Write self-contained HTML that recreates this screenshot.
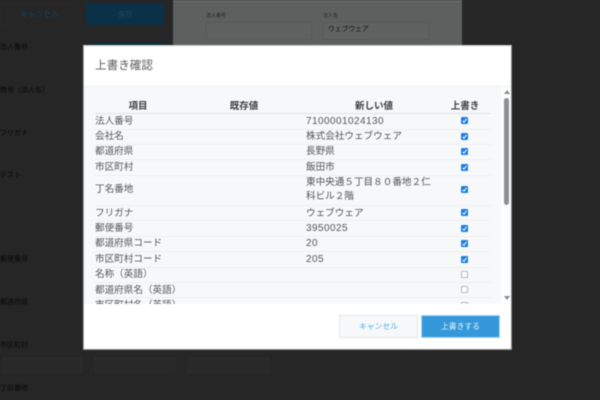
<!DOCTYPE html>
<html lang="ja">
<head>
<meta charset="utf-8">
<style>
html,body{margin:0;padding:0;width:600px;height:400px;overflow:hidden;background:#262626;font-family:"Liberation Sans","Noto Sans CJK JP",sans-serif;}
*{box-sizing:border-box;}
.a{position:absolute;white-space:nowrap;}
#wrap{position:absolute;left:0;top:0;width:600px;height:400px;overflow:hidden;filter:blur(0.4px);}
.lbl{font-size:7px;color:#080808;line-height:10px;left:0;}
.inp{background:#292929;border:1px solid #2b2b2b;}
#modal{left:83px;top:45px;width:429px;height:305px;background:#fff;border:1px solid #8c8c8c;border-top-color:#ccc;border-left-color:#aaa;}
#body{position:absolute;left:0;top:40px;width:427px;height:218px;background:#f7f8fa;border-top:1px solid #f0f1f3;overflow:hidden;}
.hd{position:absolute;top:13px;font-size:9.5px;font-weight:bold;color:#3d3d3d;line-height:14px;text-align:center;white-space:nowrap;}
.line{position:absolute;left:11px;width:396px;height:1px;background:#eceef0;}
.t{position:absolute;font-size:9.6px;color:#555;line-height:14px;white-space:nowrap;}
.n{font-size:10px;letter-spacing:.44px;}
.cb{position:absolute;left:377px;width:7px;height:7px;border-radius:1px;background:#1a7fdc;}
.cb svg{position:absolute;left:0;top:0;}
.un{background:#fff;border:1px solid #b5b5b5;}
</style>
</head>
<body>
<div id="wrap">
  <div class="a" style="left:173px;top:0;width:289px;height:45px;background:#5e6060;"></div>
  <div class="a" style="left:173px;top:0;width:289px;height:4px;background:#646665;border-bottom:1px solid #585a5a;"></div>
  <div class="a" style="left:0;top:3px;width:78px;height:23px;border:1px solid #2b2b2b;"></div>
  <div class="a" style="left:20px;top:8px;font-size:7.8px;line-height:14px;color:#0f4465;">キャンセル</div>
  <div class="a" style="left:86px;top:3px;width:78px;height:22px;background:#0b3148;"></div>
  <div class="a" style="left:118px;top:8px;font-size:7.2px;line-height:14px;color:#1c4660;">保存</div>
  <div class="a" style="left:90px;top:43px;width:78px;height:2px;background:#0b3148;"></div>

  <div class="a" style="left:206px;top:12px;font-size:5px;line-height:8px;color:#242424;">法人番号</div>
  <div class="a" style="left:206px;top:22px;width:106px;height:18px;background:#606261;border:1px solid #585a5a;"></div>
  <div class="a" style="left:323px;top:12px;font-size:5px;line-height:8px;color:#242424;">法人名</div>
  <div class="a" style="left:323px;top:22px;width:106px;height:18px;background:#606261;border:1px solid #585a5a;"></div>
  <div class="a" style="left:328px;top:24px;font-size:6.8px;line-height:12px;color:#111;">ウェブウェア</div>

  <div class="a lbl" style="top:43px;">法人番号</div>
  <div class="a lbl" style="top:86px;">商号（法人名）</div>
  <div class="a lbl" style="top:129px;">フリガナ</div>
  <div class="a lbl" style="top:171px;">テスト</div>
  <div class="a lbl" style="top:255px;">郵便番号</div>
  <div class="a lbl" style="top:298px;">都道府県</div>
  <div class="a lbl" style="top:341px;">市区町村</div>
  <div class="a lbl" style="top:384px;">丁目番地</div>
  <div class="a inp" style="left:2px;top:357px;width:81px;height:17px;"></div>
  <div class="a inp" style="left:94px;top:357px;width:82px;height:17px;"></div>
  <div class="a inp" style="left:187px;top:357px;width:83px;height:17px;"></div>

  <div id="modal" class="a">
    <div class="a" style="left:11px;top:11px;font-size:11.6px;line-height:18px;color:#5c5c5c;">上書き確認</div>
    <div id="body">
      <div class="hd" style="left:11px;width:86px;">項目</div>
      <div class="hd" style="left:120px;width:80px;">既存値</div>
      <div class="hd" style="left:250px;width:80px;">新しい値</div>
      <div class="hd" style="left:361px;width:40px;">上書き</div>
      <div class="line" style="top:26px;background:#dfe1e4;"></div>

      <div class="t" style="left:11px;top:28px;">法人番号</div><div class="t n" style="left:222px;top:28px;">7100001024130</div>
      <div class="cb" style="top:30px;"><svg width="7" height="7"><path d="M1.6 3.8L3 5.2L5.5 1.8" fill="none" stroke="#fff" stroke-width="1"/></svg></div>
      <div class="line" style="top:42px;"></div>

      <div class="t" style="left:11px;top:43px;">会社名</div><div class="t" style="left:222px;top:43px;">株式会社ウェブウェア</div>
      <div class="cb" style="top:46px;"><svg width="7" height="7"><path d="M1.6 3.8L3 5.2L5.5 1.8" fill="none" stroke="#fff" stroke-width="1"/></svg></div>
      <div class="line" style="top:57px;"></div>

      <div class="t" style="left:11px;top:58px;">都道府県</div><div class="t" style="left:222px;top:58px;">長野県</div>
      <div class="cb" style="top:61px;"><svg width="7" height="7"><path d="M1.6 3.8L3 5.2L5.5 1.8" fill="none" stroke="#fff" stroke-width="1"/></svg></div>
      <div class="line" style="top:72px;"></div>

      <div class="t" style="left:11px;top:74px;">市区町村</div><div class="t" style="left:222px;top:74px;">飯田市</div>
      <div class="cb" style="top:77px;"><svg width="7" height="7"><path d="M1.6 3.8L3 5.2L5.5 1.8" fill="none" stroke="#fff" stroke-width="1"/></svg></div>
      <div class="line" style="top:88px;"></div>

      <div class="t" style="left:11px;top:96px;">丁名番地</div>
      <div class="t" style="left:222px;top:89px;">東中央通５丁目８０番地２仁</div>
      <div class="t" style="left:222px;top:103px;">科ビル２階</div>
      <div class="cb" style="top:99px;"><svg width="7" height="7"><path d="M1.6 3.8L3 5.2L5.5 1.8" fill="none" stroke="#fff" stroke-width="1"/></svg></div>
      <div class="line" style="top:118px;"></div>

      <div class="t" style="left:11px;top:120px;">フリガナ</div><div class="t" style="left:222px;top:120px;">ウェブウェア</div>
      <div class="cb" style="top:122px;"><svg width="7" height="7"><path d="M1.6 3.8L3 5.2L5.5 1.8" fill="none" stroke="#fff" stroke-width="1"/></svg></div>
      <div class="line" style="top:133px;"></div>

      <div class="t" style="left:11px;top:135px;">郵便番号</div><div class="t n" style="left:222px;top:135px;">3950025</div>
      <div class="cb" style="top:138px;"><svg width="7" height="7"><path d="M1.6 3.8L3 5.2L5.5 1.8" fill="none" stroke="#fff" stroke-width="1"/></svg></div>
      <div class="line" style="top:149px;"></div>

      <div class="t" style="left:11px;top:150px;">都道府県コード</div><div class="t n" style="left:222px;top:150px;">20</div>
      <div class="cb" style="top:153px;"><svg width="7" height="7"><path d="M1.6 3.8L3 5.2L5.5 1.8" fill="none" stroke="#fff" stroke-width="1"/></svg></div>
      <div class="line" style="top:164px;"></div>

      <div class="t" style="left:11px;top:166px;">市区町村コード</div><div class="t n" style="left:222px;top:166px;">205</div>
      <div class="cb" style="top:169px;"><svg width="7" height="7"><path d="M1.6 3.8L3 5.2L5.5 1.8" fill="none" stroke="#fff" stroke-width="1"/></svg></div>
      <div class="line" style="top:180px;"></div>

      <div class="t" style="left:11px;top:181px;">名称（英語）</div>
      <div class="cb un" style="top:184px;"></div>
      <div class="line" style="top:195px;"></div>

      <div class="t" style="left:11px;top:197px;">都道府県名（英語）</div>
      <div class="cb un" style="top:199px;"></div>
      <div class="line" style="top:210px;"></div>

      <div class="t" style="left:11px;top:212px;">市区町村名（英語）</div>
      <div class="cb un" style="top:215px;"></div>

      <div style="position:absolute;left:417px;top:0;width:10px;height:217px;background:#fcfdfd;"></div>
      <svg style="position:absolute;left:419px;top:2px;" width="8" height="6"><path d="M1 5L4 1L7 5Z" fill="#8a8a8a"/></svg>
      <div style="position:absolute;left:420px;top:11px;width:5px;height:107px;background:#8f8f8f;border-radius:3px;"></div>
      <svg style="position:absolute;left:419px;top:208px;" width="8" height="6"><path d="M1 1L4 5L7 1Z" fill="#8a8a8a"/></svg>
    </div>
    <div class="a" style="left:255px;top:269px;width:79px;height:23px;background:#f7f8fa;border:1px solid #e3e7eb;text-align:center;font-size:7.8px;line-height:21px;color:#5aaee6;">キャンセル</div>
    <div class="a" style="left:337px;top:269px;width:79px;height:23px;background:#3498db;border:1px solid #a8d4f0;text-align:center;font-size:7.8px;line-height:21px;color:#e6f3fb;">上書きする</div>
  </div>
</div>
</body>
</html>
